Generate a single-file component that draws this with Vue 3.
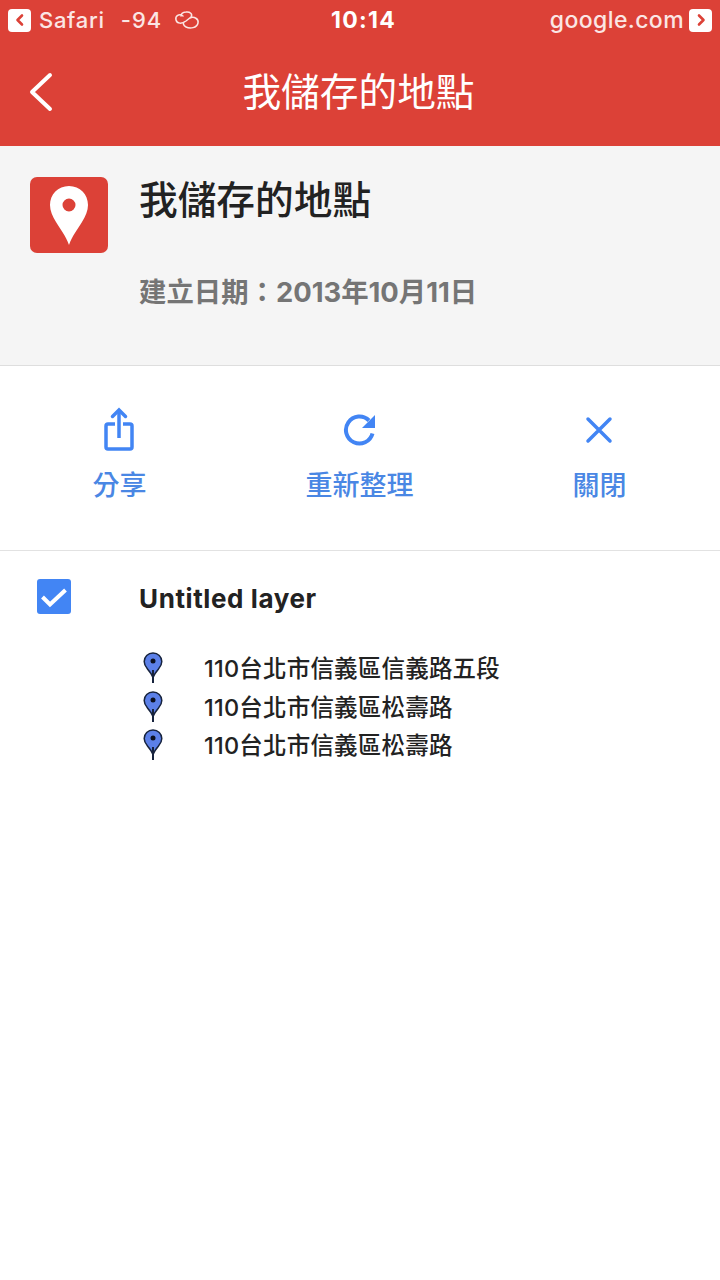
<template>
  <div class="page">
    <header class="topbar">
      <div class="status">
        <div class="status__left">
          <span class="status__badge">
            <svg width="14" height="14" viewBox="0 0 14 14"><path d="M9 2.500 4.500 7 9 11.500" fill="none" stroke="#dc4137" stroke-width="2.600" stroke-linecap="round" stroke-linejoin="round" /></svg>
          </span>
          <span class="status__app">Safari</span>
          <span class="status__signal">-94</span>
          <svg class="status__link" width="26" height="20" viewBox="0 0 26 20"><path d="M9 6C5 3 1 6 2 10c1 4 6 4 10 1l5-4c2-3-1-5.500-5-5-3 .3-5 2-5 4M16 8c4-2 9 1 8 5-1 5-8 6-12 4-3-1.500-3-4-2-5" fill="none" stroke="#fbe6e4" stroke-width="1.500" stroke-linecap="round" /></svg>
        </div>
        <span class="status__time">10:14</span>
        <div class="status__right">
          <span class="status__host">google.com</span>
          <span class="status__badge">
            <svg width="14" height="14" viewBox="0 0 14 14"><path d="M5 2.500 9.500 7 5 11.500" fill="none" stroke="#dc4137" stroke-width="2.600" stroke-linecap="round" stroke-linejoin="round" /></svg>
          </span>
        </div>
      </div>
      <div class="navbar">
        <svg class="navbar__back" width="26" height="40" viewBox="0 0 26 40"><path d="M22 3 4 20l18 17" fill="none" stroke="#fff" stroke-width="4" stroke-linecap="round" stroke-linejoin="round" /></svg>
        <h1 class="navbar__title">我儲存的地點</h1>
      </div>
    </header>

    <section class="info">
      <div class="info__logo">
        <svg width="40" height="60" viewBox="0 0 40 60"><path fill-rule="evenodd" d="M20 1C9 1 1 9.500 1 20c0 6 2.500 11 6 17 4.500 7.500 10 14 13 23 3-9 8.500-15.500 13-23 3.500-6 6-11 6-17C39 9.500 31 1 20 1Zm0 12.500a6.500 6.500 0 1 1 0 13 6.500 6.500 0 0 1 0-13Z" fill="#fff" /></svg>
      </div>
      <div class="info__text">
        <h2 class="info__title">我儲存的地點</h2>
        <p class="info__date">建立日期：2013年10月11日</p>
      </div>
    </section>

    <section class="actions">
      <div class="action">
        <svg width="34" height="44" viewBox="0 0 34 44"><g fill="none" stroke="#4285f4" stroke-width="3.500"><path d="M12 17H5a2 2 0 0 0-2 2v21a2 2 0 0 0 2 2h22a2 2 0 0 0 2-2V19a2 2 0 0 0-2-2h-7" stroke-linejoin="round" /><path d="M16 31V4" /><path d="M9.500 9.500 16 3l6.500 6.500" stroke-linecap="round" /></g></svg>
        <span class="action__label">分享</span>
      </div>
      <div class="action">
        <svg width="34" height="44" viewBox="0 0 34 44"><path d="M26 13.500A13.500 13.500 0 1 0 29.500 26.500" fill="none" stroke="#4285f4" stroke-width="4" /><path d="M32 8v13H19Z" fill="#4285f4" /></svg>
        <span class="action__label">重新整理</span>
      </div>
      <div class="action">
        <svg width="34" height="44" viewBox="0 0 34 44"><path d="M5 12l22 22M27 12 5 34" fill="none" stroke="#4285f4" stroke-width="3.500" stroke-linecap="round" /></svg>
        <span class="action__label">關閉</span>
      </div>
    </section>

    <section class="layer">
      <div class="layer__head">
        <span class="layer__check">
          <svg width="26" height="22" viewBox="0 0 26 22"><path d="M1.500 11 9 18.500 24.500 4" fill="none" stroke="#fff" stroke-width="4" /></svg>
        </span>
        <h3 class="layer__name">Untitled layer</h3>
      </div>
      <ul class="places">
        <li v-for="(place, i) in places" :key="i" class="place">
          <svg class="place__pin" width="20" height="31" viewBox="0 0 20 31">
            <path d="M10 1C5 1 1.200 4.800 1.200 9.500c0 3 1.300 5.200 3.300 7.500 2.300 2.700 4.300 5 5.500 8.500 1.200-3.500 3.200-5.800 5.500-8.500 2-2.300 3.300-4.500 3.300-7.500C18.800 4.800 15 1 10 1Z" fill="#5c80e8" stroke="#17233d" stroke-width="1.500" />
            <path d="M10 18v13" stroke="#17233d" stroke-width="2" />
            <circle cx="10" cy="9" r="2.500" fill="#0c1020" />
          </svg>
          <span class="place__name">{{ place }}</span>
        </li>
      </ul>
    </section>
  </div>
</template>

<script setup>
const places = [
  '110台北市信義區信義路五段',
  '110台北市信義區松壽路',
  '110台北市信義區松壽路'
]
</script>

<style>
html,
body {
  margin: 0;
  background: #fff;
}
</style>

<style scoped>
.page {
  width: 720px;
  height: 1280px;
  overflow: hidden;
  background: #fff;
  font-family: Inter, "Noto Sans CJK TC", sans-serif;
}

h1,
h2,
h3,
p,
ul {
  margin: 0;
  padding: 0;
}

.topbar {
  height: 146px;
  background: #dc4137;
  color: #fff;
}

.status {
  height: 40px;
  padding: 0 8px;
  display: flex;
  align-items: center;
  justify-content: space-between;
  position: relative;
  font-size: 22px;
  font-weight: 500;
  color: #fbe6e4;
}

.status__left,
.status__right {
  display: flex;
  align-items: center;
}

.status__badge {
  width: 23px;
  height: 23px;
  border-radius: 4px;
  background: #fff;
  display: flex;
  align-items: center;
  justify-content: center;
}

.status__app {
  margin-left: 8px;
  letter-spacing: 0.7px;
}

.status__signal {
  margin-left: 16px;
  letter-spacing: 1px;
}

.status__link {
  margin-left: 12px;
}

.status__time {
  position: absolute;
  left: 331px;
  font-size: 23px;
  font-weight: 700;
  letter-spacing: 1.3px;
  color: #fff;
}

.status__host {
  margin-right: 5px;
  font-size: 23px;
  letter-spacing: 0.4px;
}

.navbar {
  height: 106px;
  display: flex;
  align-items: center;
  justify-content: center;
  position: relative;
}

.navbar__back {
  position: absolute;
  left: 28px;
  top: 32px;
}

.navbar__title {
  font-size: 38.7px;
  font-weight: 400;
  line-height: 50px;
  margin-left: -3px;
  margin-top: -2px;
}

.info {
  height: 220px;
  box-sizing: border-box;
  padding: 31px 30px 0;
  display: flex;
  background: #f5f5f5;
  border-bottom: 1px solid #dedede;
}

.info__logo {
  width: 78px;
  height: 76px;
  border-radius: 7px;
  background: #dc4137;
  display: flex;
  align-items: center;
  justify-content: center;
  flex-shrink: 0;
}

.info__text {
  margin-left: 31px;
}

.info__title {
  font-size: 38.7px;
  font-weight: 500;
  line-height: 46px;
  color: #222;
}

.info__date {
  margin-top: 52px;
  font-size: 27.4px;
  font-weight: 700;
  line-height: 34px;
  color: #757575;
}

.actions {
  height: 185px;
  box-sizing: border-box;
  padding-top: 41px;
  display: grid;
  grid-template-columns: repeat(3, 240px);
  border-bottom: 1px solid #e2e2e2;
}

.action {
  display: flex;
  flex-direction: column;
  align-items: center;
}

.action__label {
  margin-top: 17px;
  margin-left: -1px;
  font-size: 27px;
  font-weight: 500;
  line-height: 36px;
  color: #4a87e4;
}

.layer__head {
  height: 95px;
  padding-left: 37px;
  display: flex;
  align-items: center;
  box-sizing: border-box;
}

.layer__check {
  width: 34px;
  height: 35px;
  border-radius: 3px;
  background: #4285f4;
  display: flex;
  align-items: center;
  justify-content: center;
  margin-top: -4px;
}

.layer__name {
  margin-left: 68px;
  font-size: 26px;
  font-weight: 700;
  letter-spacing: 0.6px;
  color: #222;
}

.places {
  list-style: none;
  padding-left: 143px;
  margin-top: 5px;
}

.place {
  height: 38.5px;
  display: flex;
  align-items: center;
}

.place__pin {
  margin-top: -5px;
}

.place__name {
  margin-left: 41px;
  margin-bottom: 6px;
  font-size: 23.5px;
  letter-spacing: 0.2px;
  font-weight: 500;
  color: #222;
}
</style>
